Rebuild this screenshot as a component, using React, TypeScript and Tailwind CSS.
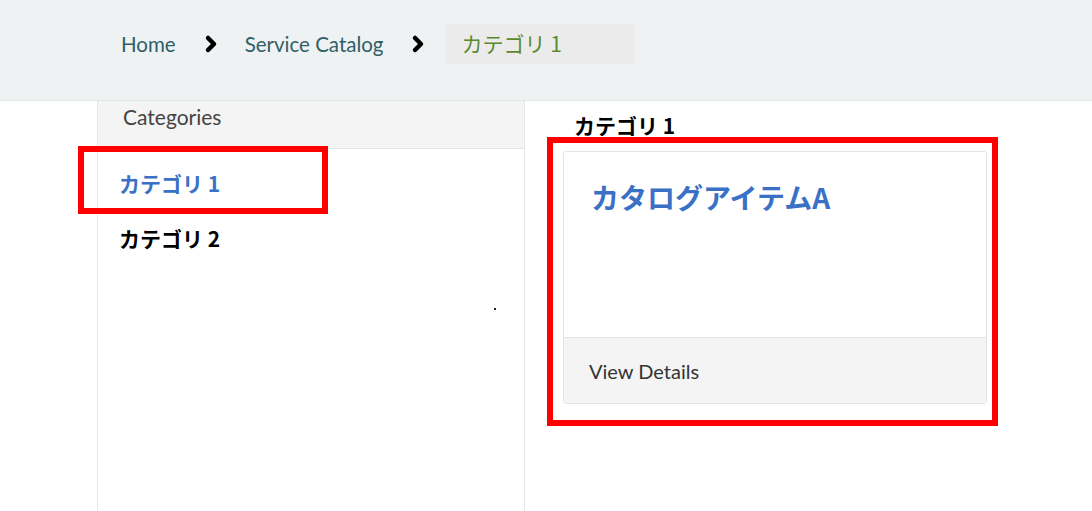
import { ChevronRight } from 'lucide-react'

const latin = "font-['Lato','Noto_Sans_CJK_JP',sans-serif]"
const cjk = "font-['Noto_Sans_CJK_JP',sans-serif]"

function Breadcrumb() {
  return (
    <div className="h-[101px] bg-[#eff2f3] border-b border-[#e1e6e8] pt-[24px] pl-[121px]">
      <div className={`flex items-center h-[40px] text-[20.5px] text-[#2f5f68] ${latin}`}>
        <span>Home</span>
        <ChevronRight className="w-[24px] h-[24px] ml-[23px] mr-[22px] text-black" strokeWidth={4.5} />
        <span>Service Catalog</span>
        <ChevronRight className="w-[24px] h-[24px] ml-[22px] mr-[16px] text-black" strokeWidth={4.5} />
        <div className={`h-[40px] w-[188px] bg-[#ebebeb] flex items-center pl-[16px] text-[21px] text-[#5a8a2e] ${cjk}`}>
          カテゴリ 1
        </div>
      </div>
    </div>
  )
}

function Sidebar() {
  return (
    <div className="ml-[97px] w-[428px] border-x border-[#e4e6e7] min-h-[410px] relative">
      <div className={`h-[48px] bg-[#f4f4f4] border-b border-[#e1e6e8] pl-[25px] text-[21px] text-[#444] ${latin}`}>
        Categories
      </div>
      <div className={`pl-[21px] pt-[20px] text-[21px] font-bold ${cjk}`}>
        <div className="h-[28px] leading-[28px] text-[#3a70c6]">カテゴリ 1</div>
        <div className="h-[28px] leading-[28px] mt-[27px] text-black">カテゴリ 2</div>
      </div>
      <span className="absolute left-[396px] top-[207px] w-[2px] h-[2px] bg-[#222]" />
    </div>
  )
}

function Catalog() {
  return (
    <div className="flex-1 pt-[11px]">
      <div className={`pl-[49px] text-[21px] font-bold text-black leading-[26px] ${cjk}`}>カテゴリ 1</div>
      <div className="ml-[38px] mt-[13px] w-[424px] h-[253px] border border-[#dfe5e8] rounded-[3px] flex flex-col overflow-hidden">
        <div className={`flex-1 bg-white pl-[27px] pt-[25px] text-[28px] leading-[40px] font-bold text-[#3a70c6] ${cjk}`}>
          カタログアイテムA
        </div>
        <div className={`h-[66px] bg-[#f4f4f4] border-t border-[#dfe5e8] pl-[25px] flex items-center text-[20px] text-[#333] ${latin}`}>
          View Details
        </div>
      </div>
    </div>
  )
}

export default function App() {
  return (
    <div className="relative w-[1092px] h-[511px] bg-white overflow-hidden">
      <Breadcrumb />
      <div className="flex">
        <Sidebar />
        <Catalog />
      </div>
      <div className="absolute left-[78px] top-[146px] w-[250px] h-[68px] border-[6px] border-[#ff0000]" />
      <div className="absolute left-[547px] top-[137px] w-[451px] h-[289px] border-[6px] border-[#ff0000]" />
    </div>
  )
}
